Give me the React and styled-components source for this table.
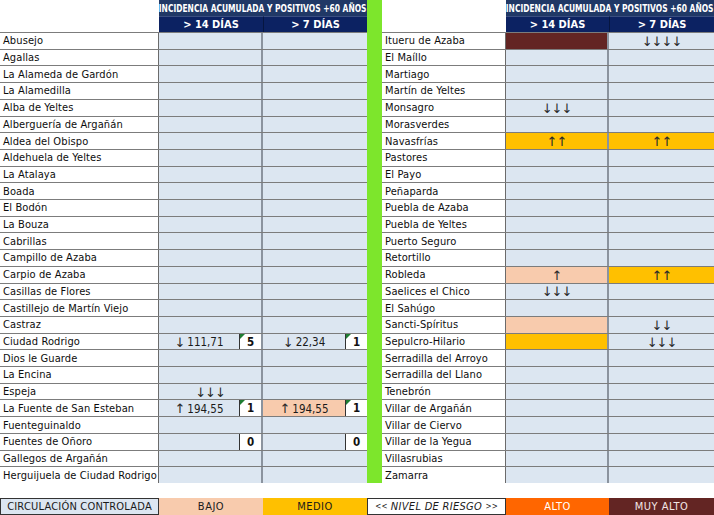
import React from 'react'
import styled, { createGlobalStyle } from 'styled-components'

const GlobalStyle = createGlobalStyle`
  html, body {
    margin: 0;
    padding: 0;
    background: #ffffff;
  }
  body {
    font-family: "DejaVu Sans Condensed", "DejaVu Sans", sans-serif;
  }
`

const BAJO = '#f8cbad'
const MEDIO = '#ffc000'
const ALTO = '#ff6600'
const MUY_ALTO = '#632523'
const CELL = '#dce6f1'

const left = [
  ['Abusejo'],
  ['Agallas'],
  ['La Alameda de Gardón'],
  ['La Alamedilla'],
  ['Alba de Yeltes'],
  ['Alberguería de Argañán'],
  ['Aldea del Obispo'],
  ['Aldehuela de Yeltes'],
  ['La Atalaya'],
  ['Boada'],
  ['El Bodón'],
  ['La Bouza'],
  ['Cabrillas'],
  ['Campillo de Azaba'],
  ['Carpio de Azaba'],
  ['Casillas de Flores'],
  ['Castillejo de Martín Viejo'],
  ['Castraz'],
  ['Ciudad Rodrigo', { arrow: '↓', text: '111,71', num: '5', flag: true }, { arrow: '↓', text: '22,34', num: '1', flag: true }],
  ['Dios le Guarde'],
  ['La Encina'],
  ['Espeja', { arrow: '↓↓↓' }],
  ['La Fuente de San Esteban', { arrow: '↑', text: '194,55', num: '1', flag: true }, { bg: BAJO, arrow: '↑', text: '194,55', num: '1', flag: true }],
  ['Fuenteguinaldo'],
  ['Fuentes de Oñoro', { num: '0' }, { num: '0' }],
  ['Gallegos de Argañán'],
  ['Herguijuela de Ciudad Rodrigo'],
]

const right = [
  ['Itueru de Azaba', { bg: MUY_ALTO }, { arrow: '↓↓↓↓' }],
  ['El Maíllo'],
  ['Martiago'],
  ['Martín de Yeltes'],
  ['Monsagro', { arrow: '↓↓↓' }],
  ['Morasverdes'],
  ['Navasfrías', { bg: MEDIO, arrow: '↑↑' }, { bg: MEDIO, arrow: '↑↑' }],
  ['Pastores'],
  ['El Payo'],
  ['Peñaparda'],
  ['Puebla de Azaba'],
  ['Puebla de Yeltes'],
  ['Puerto Seguro'],
  ['Retortillo'],
  ['Robleda', { bg: BAJO, arrow: '↑' }, { bg: MEDIO, arrow: '↑↑' }],
  ['Saelices el Chico', { arrow: '↓↓↓' }],
  ['El Sahúgo'],
  ['Sancti-Spíritus', { bg: BAJO }, { arrow: '↓↓' }],
  ['Sepulcro-Hilario', { bg: MEDIO }, { arrow: '↓↓↓' }],
  ['Serradilla del Arroyo'],
  ['Serradilla del Llano'],
  ['Tenebrón'],
  ['Villar de Argañán'],
  ['Villar de Ciervo'],
  ['Villar de la Yegua'],
  ['Villasrubias'],
  ['Zamarra'],
]

const Page = styled.div`
  width: 714px;
  height: 515px;
  display: flex;
  flex-direction: column;
  background: #fff;
  overflow: hidden;
`

const Tables = styled.div`
  display: flex;
  height: 483px;
`

const Panel = styled.div`
  display: flex;
  flex-direction: column;
`

const HeaderGrid = styled.div`
  display: grid;
  grid-template-columns: ${p => p.$cols};
  grid-template-rows: 16px 16px;
`

const HeadBlank = styled.div`
  grid-row: span 2;
  background: #fff;
`

const HeadTop = styled.div`
  grid-column: span 2;
  background: #203866;
  color: #fff;
  font-weight: bold;
  font-size: 11px;
  display: flex;
  align-items: center;
  justify-content: center;
  white-space: nowrap;
  overflow: hidden;
`

const Squeeze = styled.span`
  display: inline-block;
  margin: 0 -40px;
  transform: scaleX(${p => p.$x});
`

const HeadSub = styled.div`
  background: #0c2262;
  color: #fff;
  font-weight: bold;
  font-size: 11px;
  display: flex;
  align-items: center;
  justify-content: center;
  border-top: 1px solid #3a4e80;
  border-left: ${p => (p.$divider ? '1px solid #061640' : 'none')};
`

const Rows = styled.div`
  flex: 1;
  display: grid;
  grid-template-rows: repeat(27, 1fr);
`

const Row = styled.div`
  display: grid;
  grid-template-columns: ${p => p.$cols};
  border-top: 1px solid #7c7c7c;
  min-height: 0;
`

const Name = styled.div`
  background: #fff;
  color: #0d0d0d;
  font-size: 11px;
  letter-spacing: 0.1px;
  padding-left: 3px;
  display: flex;
  align-items: center;
  white-space: nowrap;
  overflow: hidden;
  border-right: 1px solid #6b6b6b;
`

const Value = styled.div`
  background: ${p => p.$bg || CELL};
  display: flex;
  align-items: stretch;
  border-right: ${p => (p.$divider ? '2px solid #8b939e' : 'none')};
  min-width: 0;
`

const ValueText = styled.div`
  flex: 1;
  display: flex;
  align-items: center;
  justify-content: center;
  gap: 3px;
  font-size: 11.5px;
  color: #1a1a1a;
  padding-top: 1px;
  white-space: nowrap;
`

const Arrow = styled.span`
  font-family: "DejaVu Sans", sans-serif;
  font-size: 13px;
  line-height: 1;
  letter-spacing: -1px;
  color: #2a2a2a;
`

const NumBox = styled.div`
  position: relative;
  width: 21px;
  background: #fff;
  border-left: 1px solid #333;
  display: flex;
  align-items: center;
  justify-content: center;
  font-size: 11.5px;
  font-weight: bold;
  color: #111;
`

const Flag = styled.span`
  position: absolute;
  top: 0;
  left: 0;
  width: 0;
  height: 0;
  border-top: 5px solid #1e7d32;
  border-right: 5px solid transparent;
`

const GreenBar = styled.div`
  width: 15px;
  background: #7de62c;
`

const Footer = styled.div`
  margin-top: 15px;
  height: 17px;
  display: grid;
  grid-template-columns: 159px 104px 104px 139px 103px 105px;
`

const Legend = styled.div`
  background: ${p => p.$bg};
  color: ${p => p.$color || '#1a1a1a'};
  font-size: 11px;
  letter-spacing: ${p => p.$ls || '0.5px'};
  font-style: ${p => (p.$italic ? 'italic' : 'normal')};
  display: flex;
  align-items: center;
  justify-content: center;
  white-space: nowrap;
  overflow: hidden;
  box-sizing: border-box;
  border: ${p => (p.$boxed ? '1px solid #333' : 'none')};
`

const Chevron = styled.span`
  font-size: 8px;
  letter-spacing: 0;
`

function Cell({ cell, divider }) {
  const c = cell || {}
  return (
    <Value $bg={c.bg} $divider={divider}>
      <ValueText>
        {c.arrow && <Arrow>{c.arrow}</Arrow>}
        {c.text}
      </ValueText>
      {c.num && (
        <NumBox>
          {c.flag && <Flag />}
          {c.num}
        </NumBox>
      )}
    </Value>
  )
}

function Table({ data, cols }) {
  return (
    <Panel>
      <HeaderGrid $cols={cols}>
        <HeadBlank />
        <HeadTop>
          <Squeeze $x={0.76}>INCIDENCIA ACUMULADA Y POSITIVOS +60 AÑOS</Squeeze>
        </HeadTop>
        <HeadSub>&gt; 14 DÍAS</HeadSub>
        <HeadSub $divider>&gt; 7 DÍAS</HeadSub>
      </HeaderGrid>
      <Rows>
        {data.map(([name, a, b]) => (
          <Row key={name} $cols={cols}>
            <Name>{name}</Name>
            <Cell cell={a} divider />
            <Cell cell={b} />
          </Row>
        ))}
      </Rows>
    </Panel>
  )
}

export default function App() {
  return (
    <Page>
      <GlobalStyle />
      <Tables>
        <Table data={left} cols="159px 104px 104px" />
        <GreenBar />
        <Table data={right} cols="124px 103px 105px" />
      </Tables>
      <Footer>
        <Legend $bg={CELL} $boxed $ls="0.2px">CIRCULACIÓN CONTROLADA</Legend>
        <Legend $bg={BAJO}>BAJO</Legend>
        <Legend $bg={MEDIO}>MEDIO</Legend>
        <Legend $bg="#fff" $boxed $italic $ls="0.3px">
          <Chevron>&lt;&lt;</Chevron>&nbsp;NIVEL DE RIESGO&nbsp;<Chevron>&gt;&gt;</Chevron>
        </Legend>
        <Legend $bg={ALTO} $color="#fff">ALTO</Legend>
        <Legend $bg={MUY_ALTO} $color="#f3e6e6">MUY ALTO</Legend>
      </Footer>
    </Page>
  )
}
